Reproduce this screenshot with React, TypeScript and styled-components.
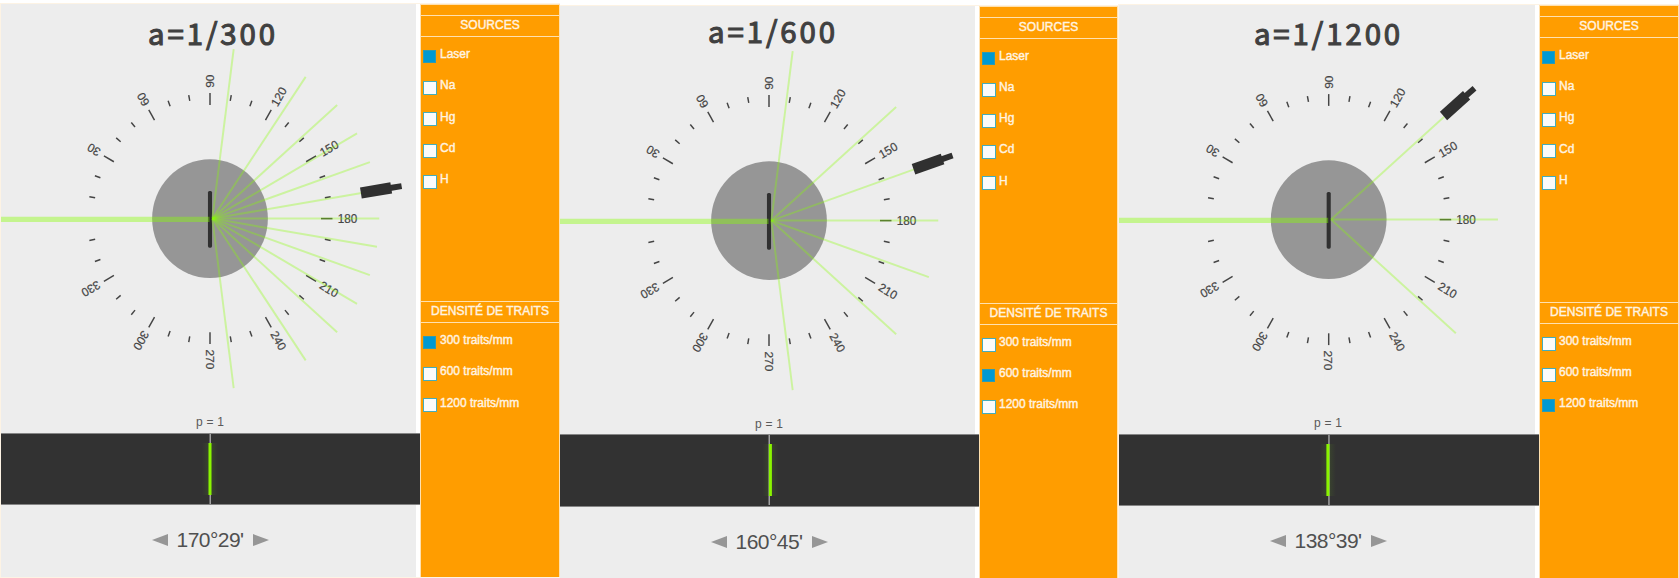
import React from "react";
import styled, { createGlobalStyle } from "styled-components";

const GlobalStyle = createGlobalStyle`
  body {
    margin: 0;
    background: #ffffff;
    font-family: "Liberation Sans", Arial, sans-serif;
    overflow: hidden;
  }
`;

const Page = styled.main`
  display: flex;
  align-items: flex-start;
  width: 1679px;
  height: 578px;
  overflow: hidden;
`;

const Panel = styled.section<{ $top: number; $edge: boolean }>`
  box-sizing: border-box;
  display: flex;
  flex: none;
  height: 572.6px;
  margin-top: ${(p) => p.$top}px;
  border-left: ${(p) => (p.$edge ? "1px solid #fdf3e4" : "none")};
  box-shadow: 0 -1px 0 #fdf3e4, 0 1px 0 #fdf3e4;
`;

const Stage = styled.div<{ $width: number }>`
  box-sizing: border-box;
  display: flex;
  flex-direction: column;
  width: ${(p) => p.$width}px;
  border-right: 4px solid #ffffff;
  background: #ededed;
`;

const Title = styled.h2<{ $baseline: number; $shift: number }>`
  box-sizing: border-box;
  width: 418px;
  height: 40px;
  margin: 0;
  padding: ${(p) => p.$baseline - 25.5}px 0 0 ${(p) => p.$shift}px;
  color: #404040;
  font-family: "Noto Sans CJK SC", sans-serif;
  font-size: 29.4px;
  font-weight: 400;
  line-height: 40px;
  letter-spacing: 2.9px;
  text-align: center;
  white-space: nowrap;
  -webkit-text-stroke: 1.1px #404040;
`;

const DialSvg = styled.svg`
  display: block;
  flex: none;
  width: 418px;
  height: 370px;
  overflow: visible;
`;

const OrderLabel = styled.div`
  width: 418px;
  height: 18.6px;
  color: #5a5a5a;
  font-size: 12px;
  line-height: 16px;
  letter-spacing: 0.2px;
  text-align: center;
`;

const Band = styled.div`
  box-sizing: border-box;
  flex: none;
  height: 72.4px;
  margin-right: -4px;
  border-top: 1px solid #858585;
  border-bottom: 1px solid #858585;
  background: #323232;
`;

const BandSvg = styled.svg`
  display: block;
  width: 418px;
  height: 70px;
`;

const AngleRow = styled.div`
  display: flex;
  align-items: center;
  justify-content: center;
  gap: 9px;
  width: 418px;
  height: 36px;
  margin-top: 17.2px;
`;

const AngleValue = styled.span`
  width: 67px;
  color: #505050;
  font-size: 21px;
  line-height: 36px;
  letter-spacing: -0.55px;
  text-align: center;
  white-space: nowrap;
`;

const ArrowSvg = styled.svg`
  display: block;
  width: 16px;
  height: 12px;
  fill: #969696;
`;

const Sidebar = styled.aside<{ $width: number }>`
  box-sizing: border-box;
  width: ${(p) => p.$width}px;
  padding-top: 9.8px;
  border: solid #ffe1b0;
  border-width: 1px 1px 0 1px;
  background: #ff9d00;
  color: #fff4e2;
  font-size: 12px;
  -webkit-text-stroke: 0.4px #fff4e2;
`;

const Group = styled.div<{ $height: number }>`
  height: ${(p) => p.$height}px;
`;

const GroupTitle = styled.div`
  box-sizing: border-box;
  height: 22px;
  border-top: 1px solid #ffe1b0;
  border-bottom: 1px solid #ffe1b0;
  line-height: 18px;
  text-align: center;
  white-space: nowrap;
`;

const Options = styled.div`
  display: flex;
  flex-direction: column;
  padding: 13px 0 0 2px;
`;

const Option = styled.div`
  display: flex;
  align-items: flex-start;
  height: 31.2px;
`;

const Box = styled.span<{ $checked: boolean }>`
  box-sizing: border-box;
  width: ${(p) => (p.$checked ? 13 : 14)}px;
  height: ${(p) => (p.$checked ? 13 : 14)}px;
  margin-right: ${(p) => (p.$checked ? 4 : 3)}px;
  border: 1px solid ${(p) => (p.$checked ? "#2f9bb0" : "#45adba")};
  background: ${(p) => (p.$checked ? "#0099d2" : "#fbfbfb")};
`;

const OptionLabel = styled.span`
  margin-top: -2.8px;
  line-height: 14px;
  white-space: nowrap;
`;

const INK = "#444444";
const LASER = "#88ff00";
const SQUEEZE = 0.976;
const TICKS = Array.from({ length: 35 }, (_, i) => (i + 1) * 10);

function Dial({ cx, rays, telescope }: { cx: number; rays: number[]; telescope: number }) {
  const all = [0, ...rays, ...rays.map((r) => -r)];
  return (
    <DialSvg viewBox="0 0 418 370">
      <g transform={`translate(${cx} 174.6) scale(${SQUEEZE} 1)`}>
        <circle r="59.3" fill="#969696" />
        {TICKS.map((deg) => {
          const major = deg % 30 === 0;
          return (
            <g key={deg} transform={`rotate(${deg - 180})`}>
              <line x1={major ? 113.7 : 119.5} x2="125.5" stroke={INK} strokeWidth="1.5" />
              {major && (
                <text x="130.8" y="4.4" fontSize="12" fill={INK} stroke={INK} strokeWidth="0.2">
                  {deg}
                </text>
              )}
            </g>
          );
        })}
        <rect x="-2.1" y="-27.7" width="4.2" height="56.8" rx="1.6" fill="#303030" />
        <line x1={-cx / SQUEEZE} x2="-0.5" y1="0.7" y2="0.7" stroke={LASER} strokeWidth="5.2" strokeOpacity="0.4" />
        {all.map((deg) => {
          const stopped = Math.abs(deg - telescope) < 0.5;
          return (
            <line
              key={deg}
              transform={`translate(2.4 0) rotate(${-deg})`}
              x2={stopped ? 155 : 171}
              stroke={LASER}
              strokeWidth="2"
              strokeOpacity="0.33"
            />
          );
        })}
        <g transform={`rotate(${-telescope})`} fill="#303030">
          <rect x="156.7" y="-5.6" width="31.5" height="11.2" />
          <rect x="187" y="-3" width="12" height="6" />
        </g>
      </g>
    </DialSvg>
  );
}

function Spectrum({ cx, line, id }: { cx: number; line: number; id: string }) {
  return (
    <Band>
      <BandSvg viewBox="0 0 418 70">
        <defs>
          <linearGradient id={id}>
            <stop offset="0" stopColor={LASER} stopOpacity="0" />
            <stop offset="0.5" stopColor={LASER} stopOpacity="0.1" />
            <stop offset="1" stopColor={LASER} stopOpacity="0" />
          </linearGradient>
        </defs>
        <rect x={cx - 0.5} width="1.5" height="71" fill="#a0a0a0" />
        <rect x={line - 8} y="9" width="16" height="52" fill={`url(#${id})`} />
        <rect x={line - 1.5} y="9" width="3" height="52" fill="#8af500" />
      </BandSvg>
    </Band>
  );
}

function Choices({ items, selected }: { items: string[]; selected: string }) {
  return (
    <Options>
      {items.map((item) => (
        <Option key={item}>
          <Box $checked={item === selected} />
          <OptionLabel>{item}</OptionLabel>
        </Option>
      ))}
    </Options>
  );
}

const SOURCES = ["Laser", "Na", "Hg", "Cd", "H"];
const DENSITIES = ["300 traits/mm", "600 traits/mm", "1200 traits/mm"];

const EXPERIMENTS = [
  {
    title: "a=1/300", angle: "170°29'", density: DENSITIES[0], telescope: 9.4,
    rays: [9.5, 19.3, 29.9, 41.6, 56, 82.65],
    top: 4.2, edge: true, stage: 419, sidebar: 140, cx: 209, line: 209, baseline: 33, shift: 6,
  },
  {
    title: "a=1/600", angle: "160°45'", density: DENSITIES[1], telescope: 19.1,
    rays: [19.3, 41.6, 82.65],
    top: 5.8, edge: false, stage: 419, sidebar: 139, cx: 209, line: 210.4, baseline: 29.5, shift: 8,
  },
  {
    title: "a=1/1200", angle: "138°39'", density: DENSITIES[2], telescope: 41.35,
    rays: [41.6],
    top: 5, edge: true, stage: 420, sidebar: 140, cx: 209.7, line: 208.9, baseline: 32, shift: 1,
  },
];

export default function App() {
  return (
    <>
      <GlobalStyle />
      <Page>
        {EXPERIMENTS.map((e) => (
          <Panel key={e.title} $top={e.top} $edge={e.edge}>
            <Stage $width={e.stage}>
              <Title $baseline={e.baseline} $shift={e.shift}>{e.title}</Title>
              <Dial cx={e.cx} rays={e.rays} telescope={e.telescope} />
              <OrderLabel>p = 1</OrderLabel>
              <Spectrum cx={e.cx} line={e.line} id={`glow-${e.stage}-${e.rays.length}`} />
              <AngleRow>
                <ArrowSvg viewBox="0 0 16 12"><path d="M16 0V12L0 6Z" /></ArrowSvg>
                <AngleValue>{e.angle}</AngleValue>
                <ArrowSvg viewBox="0 0 16 12"><path d="M0 0V12L16 6Z" /></ArrowSvg>
              </AngleRow>
            </Stage>
            <Sidebar $width={e.sidebar}>
              <Group $height={286}>
                <GroupTitle>SOURCES</GroupTitle>
                <Choices items={SOURCES} selected="Laser" />
              </Group>
              <Group $height={160}>
                <GroupTitle>DENSITÉ DE TRAITS</GroupTitle>
                <Choices items={DENSITIES} selected={e.density} />
              </Group>
            </Sidebar>
          </Panel>
        ))}
      </Page>
    </>
  );
}
